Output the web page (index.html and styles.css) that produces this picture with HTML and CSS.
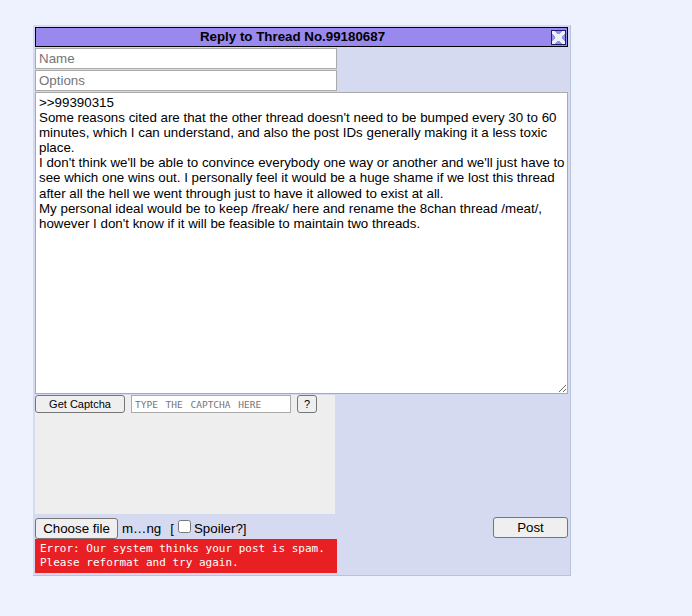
FILE: index.html
```html
<!DOCTYPE html>
<html lang="en">
<head>
<meta charset="utf-8">
<title>Quick Reply</title>
<link rel="stylesheet" href="styles.css">
</head>
<body>
<form class="panel">
  <div class="head">
    <span class="head-title">Reply to Thread No.99180687</span>
    <svg class="close" width="15" height="15" viewBox="0 0 15 15" shape-rendering="crispEdges">
      <rect x="0.5" y="0.5" width="14" height="14" fill="#eef1fb" stroke="#1d1d78"/>
      <path d="M4 1h7v1h-1v1H9v1H6V3H5V2H4z" fill="#8f97d8"/>
      <path d="M4 14h7v-1h-1v-1H9v-1H6v1H5v1H4z" fill="#8f97d8"/>
      <path d="M1 4v7h1v-1h1V9h1V6H3V5H2V4z" fill="#8f97d8"/>
      <path d="M14 4v7h-1v-1h-1V9h-1V6h1V5h1V4z" fill="#8f97d8"/>
    </svg>
  </div>
  <input class="field" type="text" placeholder="Name">
  <input class="field" type="text" placeholder="Options">
  <textarea class="comment">&gt;&gt;99390315
Some reasons cited are that the other thread doesn't need to be bumped every 30 to 60 minutes, which I can understand, and also the post IDs generally making it a less toxic place.
I don't think we'll be able to convince everybody one way or another and we'll just have to see which one wins out. I personally feel it would be a huge shame if we lost this thread after all the hell we went through just to have it allowed to exist at all.
My personal ideal would be to keep /freak/ here and rename the 8chan thread /meat/, however I don't know if it will be feasible to maintain two threads.</textarea>
  <div class="captcha">
    <div class="captcha-row">
      <button class="btn btn-get" type="button">Get Captcha</button>
      <input class="captcha-input" type="text" placeholder="TYPE THE CAPTCHA HERE">
      <button class="btn btn-help" type="button">?</button>
    </div>
  </div>
  <div class="file-row">
    <div class="file-left">
      <button class="btn-file" type="button">Choose file</button>
      <span class="file-name">m…ng</span>
      <span class="spoiler">[<input class="spoiler-box" type="checkbox">Spoiler?]</span>
    </div>
    <button class="btn-post" type="button">Post</button>
  </div>
  <div class="error">Error: Our system thinks your post is spam.<br>Please reformat and try again.</div>
</form>
</body>
</html>
```
FILE: styles.css
```css
html, body { margin: 0; padding: 0; }
body {
  background: #eef2ff;
  height: 616px;
  overflow: hidden;
  font-family: "Liberation Sans", Arial, sans-serif;
  color: #000;
}
.panel {
  box-sizing: border-box;
  width: 538px;
  height: 551px;
  margin: 25px 0 0 33px;
  padding: 2px;
  background: #d6daf0;
  border-right: 1px solid #b7c5d9;
  border-bottom: 1px solid #b7c5d9;
  display: flex;
  flex-direction: column;
  align-items: flex-start;
}
.head {
  box-sizing: border-box;
  width: 533px;
  height: 20px;
  padding-right: 18px;
  background: #9988ee;
  border: 1px solid #000;
  position: relative;
  display: flex;
  align-items: center;
  justify-content: center;
  font-weight: bold;
  font-size: 13.33px;
  line-height: 18px;
}
.close {
  position: absolute;
  right: 1px;
  top: 2px;
}
.field {
  box-sizing: border-box;
  width: 302px;
  height: 21px;
  margin: 1px 0 0;
  padding: 0 3px;
  border: 1px solid #aaa;
  background: #fff;
  font-family: inherit;
  font-size: 13.33px;
  outline: none;
}
.field::placeholder { color: #757575; opacity: 1; }
.comment {
  box-sizing: border-box;
  display: block;
  width: 533px;
  height: 302px;
  margin: 1px 0 0;
  padding: 2px 1px 2px 3px;
  border: 1px solid #aaa;
  background: #fff;
  font-family: inherit;
  font-size: 13.33px;
  line-height: 15.1px;
  color: #000;
  outline: none;
  resize: both;
  overflow: hidden;
}
.captcha {
  box-sizing: border-box;
  width: 300px;
  height: 119px;
  margin-top: 1px;
  background: #eee;
}
.captcha-row {
  display: flex;
  align-items: flex-start;
}
.btn {
  box-sizing: border-box;
  height: 18px;
  padding: 0;
  border: 1px solid #767676;
  border-radius: 3px;
  background: #efefef;
  font-family: inherit;
  font-size: 11px;
  color: #000;
}
.btn-get { width: 90px; }
.btn-help { width: 20px; margin-left: 6px; }
.captcha-input {
  box-sizing: border-box;
  width: 160px;
  height: 18px;
  margin-left: 6px;
  padding: 0 3px;
  border: 1px solid #aaa;
  background: #fff;
  font-family: "DejaVu Sans Mono", monospace;
  font-size: 9.5px;
  word-spacing: 2px;
  outline: none;
}
.captcha-input::placeholder { color: #757575; opacity: 1; }
.file-row {
  box-sizing: border-box;
  width: 533px;
  margin-top: 4px;
  height: 21px;
  display: flex;
  justify-content: space-between;
  align-items: flex-start;
}
.file-left {
  display: flex;
  align-items: center;
  height: 21px;
  font-size: 13.33px;
}
.btn-file {
  box-sizing: border-box;
  width: 83px;
  height: 21px;
  padding: 0;
  border: 1px solid #767676;
  border-radius: 3px;
  background: #efefef;
  font-family: inherit;
  font-size: 13.33px;
  color: #000;
}
.file-name { margin-left: 4px; }
.spoiler { margin-left: 9px; display: flex; align-items: center; }
.spoiler-box {
  width: 13px;
  height: 13px;
  margin: 0 3px 0 4px;
  position: relative;
  top: -2px;
}
.btn-post {
  box-sizing: border-box;
  width: 75px;
  height: 21px;
  margin-top: -1px;
  padding: 0;
  border: 1px solid #767676;
  border-radius: 3px;
  background: #efefef;
  font-family: inherit;
  font-size: 13.33px;
  color: #000;
}
.error {
  box-sizing: border-box;
  width: 302px;
  height: 34px;
  padding: 3px 5px;
  background: #e81f23;
  color: #fff;
  font-family: "DejaVu Sans Mono", monospace;
  font-size: 11px;
  line-height: 14px;
  white-space: nowrap;
}
```
